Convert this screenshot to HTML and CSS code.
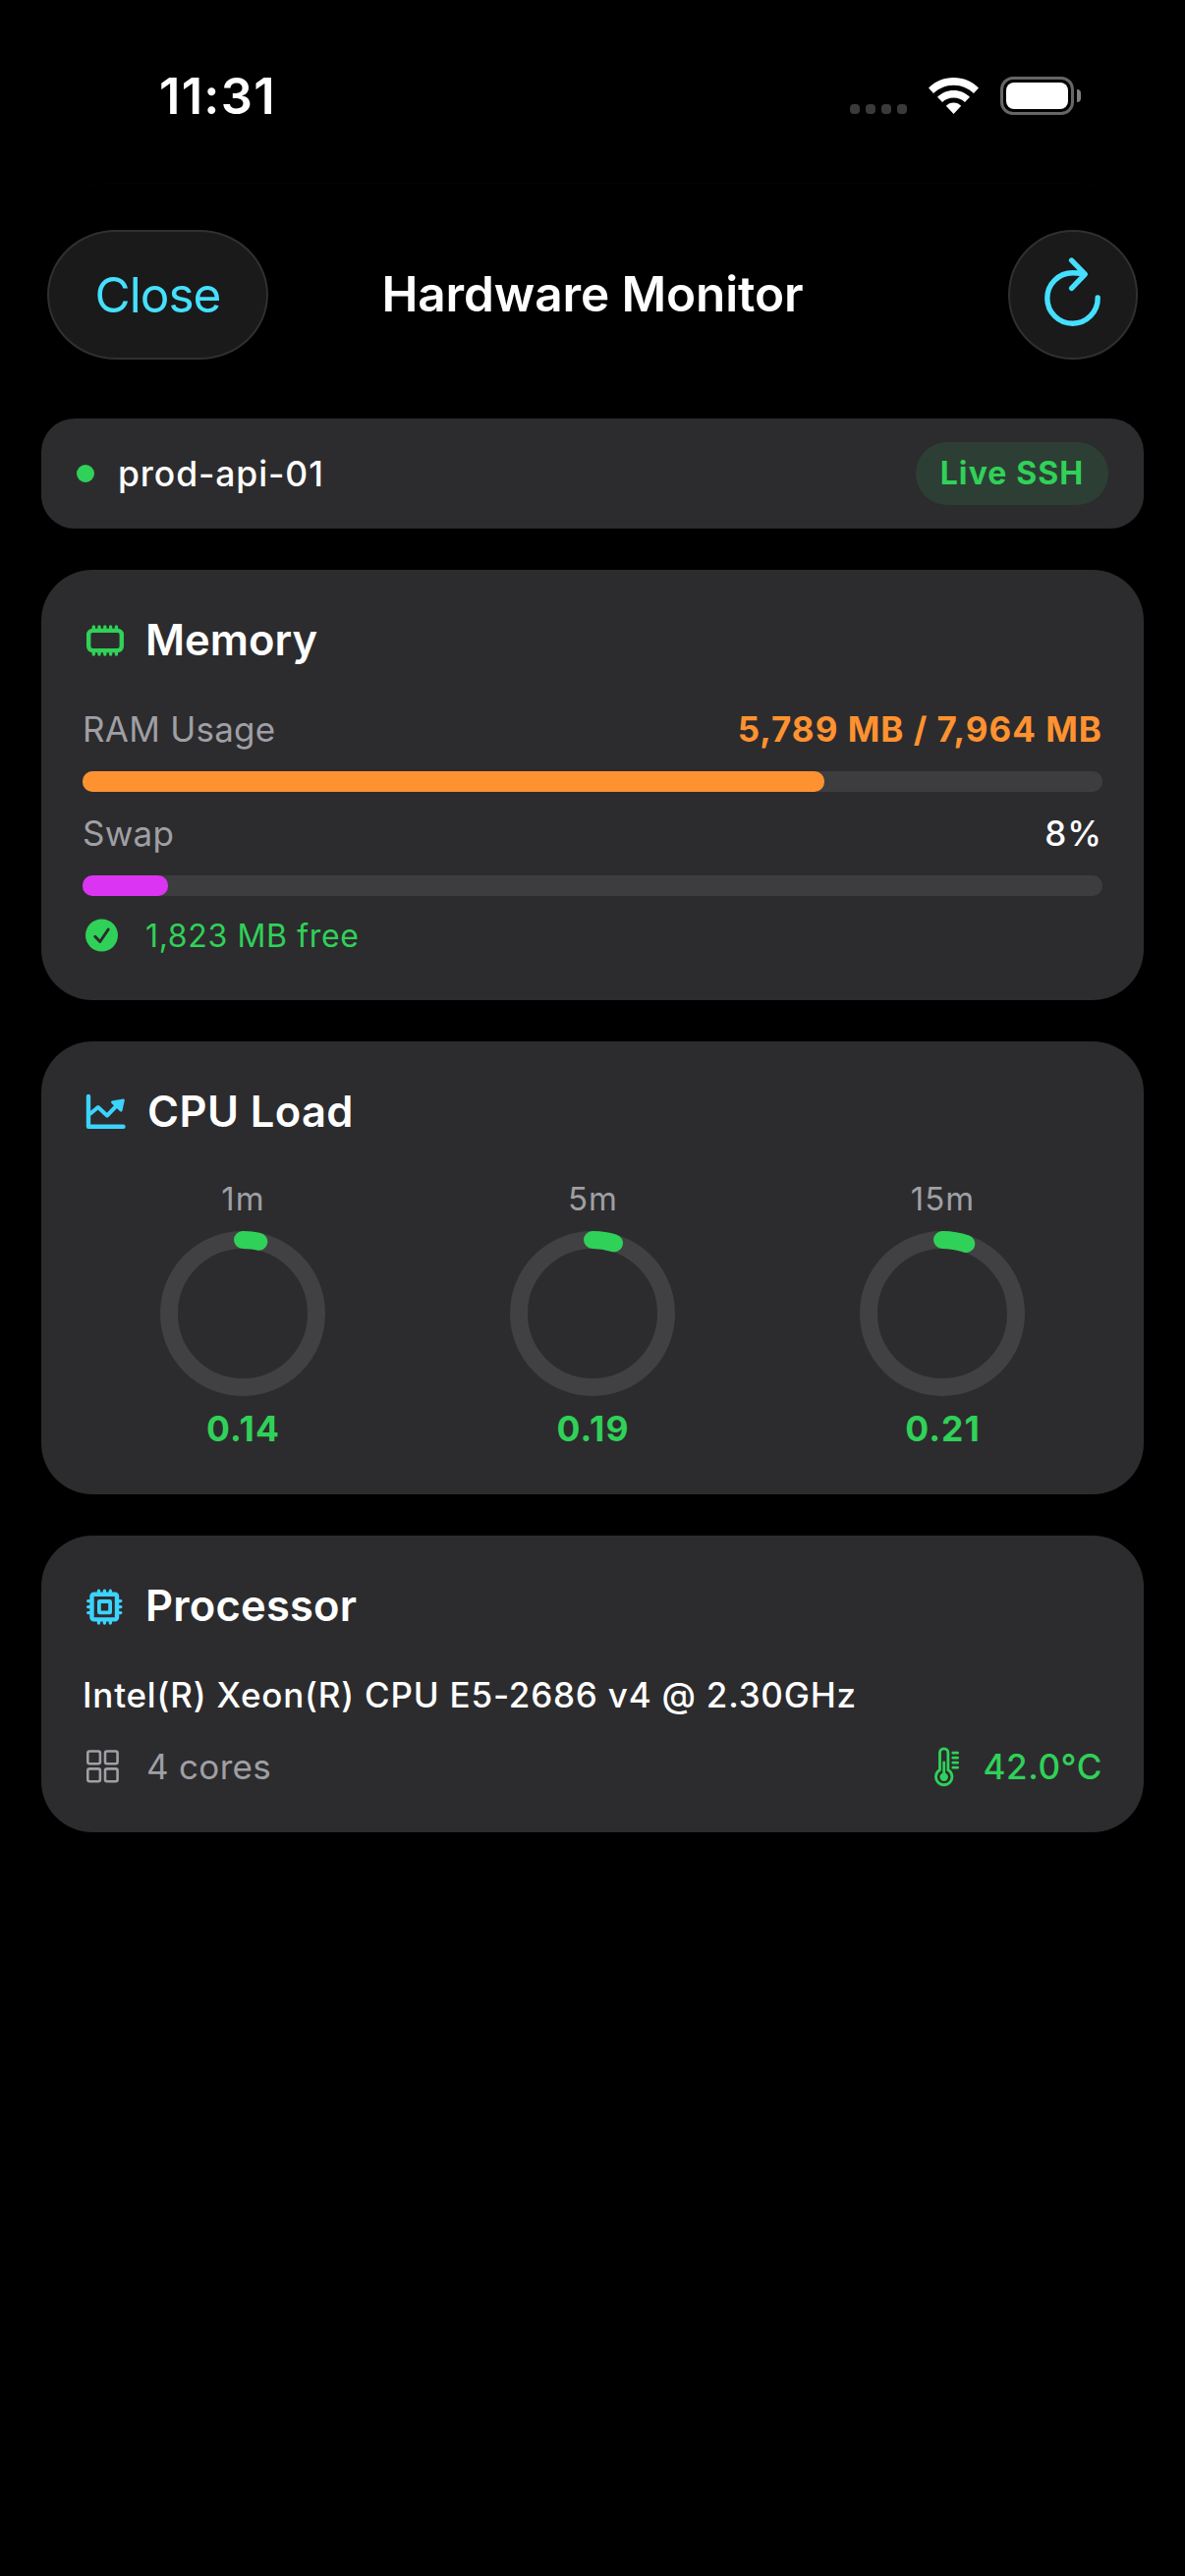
FILE: index.html
```
<!DOCTYPE html>
<html lang="en">
<head>
    <meta charset="UTF-8">
    <meta name="viewport" content="width=device-width, initial-scale=1.0">
    <title>Hardware Monitor</title>
    <link rel="stylesheet" href="styles.css">
</head>
<body>
    <div class="status-bar">
        <span class="time">11:31</span>
        <div class="status-icons">
            <div class="signal"><i></i><i></i><i></i><i></i></div>
            <svg class="wifi" viewBox="0 0 51 37">
                <path d="M25.500 0C35.500 0 44.500 4 51 10.500L46 16C40.500 11 33.500 7.800 25.500 7.800S10.500 11 5 16L0 10.500C6.500 4 15.500 0 25.500 0Z"/>
                <path d="M25.500 13C32 13 37.600 15.500 42 19.700L37 25C34 22.200 30 20.500 25.500 20.500S17 22.200 14 25L9 19.700C13.400 15.500 19 13 25.500 13Z"/>
                <path d="M25.500 25.500C28.500 25.500 31.200 26.700 33.200 28.800L25.500 37L17.800 28.800C19.800 26.700 22.500 25.500 25.500 25.500Z"/>
            </svg>
            <div class="battery"><div class="battery-body"><div class="battery-level"></div></div><div class="battery-cap"></div></div>
        </div>
    </div>

    <div class="sheet">
        <header class="header">
            <button class="btn btn-close">Close</button>
            <h1 class="header-title">Hardware Monitor</h1>
            <button class="btn btn-refresh">
                <svg viewBox="1026 234 132 132">
                    <path d="M1117.200 303A25.700 25.700 0 1 1 1091.500 277.800Q1097 277.800 1103.500 279M1090.600 265L1104.300 279.200L1090.600 293.300"/>
                </svg>
            </button>
        </header>

        <main class="content">
            <section class="host">
                <span class="host-dot"></span>
                <span class="host-name">prod-api-01</span>
                <span class="host-badge">Live SSH</span>
            </section>

            <section class="card memory">
                <h2 class="card-title">
                    <svg class="icon green" viewBox="84 622 60 60">
                        <rect x="90.200" y="641.900" width="33.600" height="20.200" rx="4"/>
                        <path d="M95.300 638v3M101 638v3M106.800 638v3M112.600 638v3M118.400 638v3M95.300 663v3M101 663v3M106.800 663v3M112.600 663v3M118.400 663v3" class="pins"/>
                    </svg>
                    <span>Memory</span>
                </h2>
                <div class="row">
                    <span class="label">RAM Usage</span>
                    <span class="value orange">5,789 MB / 7,964 MB</span>
                </div>
                <div class="bar"><div class="bar-fill bar-orange" style="width: 72.7%"></div></div>
                <div class="row">
                    <span class="label">Swap</span>
                    <span class="value plain">8%</span>
                </div>
                <div class="bar"><div class="bar-fill bar-purple" style="width: 8.4%"></div></div>
                <div class="free">
                    <svg class="icon-check" viewBox="0 0 34 34">
                        <circle cx="16.500" cy="17" r="16.500"/>
                        <path d="M9.800 18.300L14.800 23.500L23.200 11"/>
                    </svg>
                    <span>1,823 MB free</span>
                </div>
            </section>

            <section class="card cpu">
                <h2 class="card-title">
                    <svg class="icon cyan" viewBox="84 1102 60 60">
                        <path d="M90 1116v30.800h35.500" class="axis"/>
                        <path d="M92 1133.500L99.800 1127L109 1135.500L121 1123" class="line"/>
                        <path d="M114 1120.500L125.500 1118.500Q127 1118.400 126.800 1120L124.500 1130.500Q123.500 1132.500 122 1131L113.500 1123Q112.200 1121.400 114 1120.500Z" class="head"/>
                    </svg>
                    <span>CPU Load</span>
                </h2>
                <div class="loads">
                    <div class="load">
                        <span class="load-label">1m</span>
                        <svg class="ring" viewBox="0 0 168 168">
                            <circle cx="84" cy="84" r="75"/>
                            <circle cx="84" cy="84" r="75" class="arc" pathLength="400" stroke-dasharray="14 400"/>
                        </svg>
                        <span class="load-value">0.14</span>
                    </div>
                    <div class="load">
                        <span class="load-label">5m</span>
                        <svg class="ring" viewBox="0 0 168 168">
                            <circle cx="84" cy="84" r="75"/>
                            <circle cx="84" cy="84" r="75" class="arc" pathLength="400" stroke-dasharray="19 400"/>
                        </svg>
                        <span class="load-value">0.19</span>
                    </div>
                    <div class="load">
                        <span class="load-label">15m</span>
                        <svg class="ring" viewBox="0 0 168 168">
                            <circle cx="84" cy="84" r="75"/>
                            <circle cx="84" cy="84" r="75" class="arc" pathLength="400" stroke-dasharray="21 400"/>
                        </svg>
                        <span class="load-value">0.21</span>
                    </div>
                </div>
            </section>

            <section class="card processor">
                <h2 class="card-title">
                    <svg class="icon cyan" viewBox="84 1605 60 60">
                        <rect x="93.500" y="1622.700" width="25.500" height="25.700" rx="2"/>
                        <rect x="100.900" y="1630" width="11.200" height="11.400" rx="0.500" class="core"/>
                        <path d="M100.500 1619.300v2M106.400 1619.300v2M112.300 1619.300v2M100.500 1650v2M106.400 1650v2M112.300 1650v2M89.700 1629.600h2M89.700 1635.600h2M89.700 1641.600h2M120.800 1629.600h2M120.800 1635.600h2M120.800 1641.600h2" class="pins"/>
                    </svg>
                    <span>Processor</span>
                </h2>
                <p class="model">Intel(R) Xeon(R) CPU E5-2686 v4 @ 2.30GHz</p>
                <div class="row">
                    <span class="cores">
                        <svg class="icon-grid" viewBox="0 0 34 34">
                            <rect x="1.300" y="1.500" width="12.600" height="12.800" rx="2"/>
                            <rect x="19" y="1.500" width="12.600" height="12.800" rx="2"/>
                            <rect x="1.300" y="19.400" width="12.600" height="12.800" rx="2"/>
                            <rect x="19" y="19.400" width="12.600" height="12.800" rx="2"/>
                        </svg>
                        <span>4 cores</span>
                    </span>
                    <span class="temp">
                        <svg class="icon-temp" viewBox="0 0 26 41">
                            <path d="M5.500 23.500V6a4.200 4.200 0 0 1 8.400 0V23.500A8.200 8.200 0 1 1 5.500 23.500Z"/>
                            <path d="M9.700 16V30M18.800 6.200h4.800M18.800 11.200h4.800M18.800 16.200h4.800M18.800 21.200h4.800"/>
                            <circle cx="9.700" cy="30.800" r="4.200"/>
                        </svg>
                        <span>42.0°C</span>
                    </span>
                </div>
            </section>
        </main>
    </div>
</body>
</html>
```
FILE: styles.css
```
* {
    margin: 0;
    padding: 0;
    box-sizing: border-box;
}
body {
    width: 1206px;
    height: 2622px;
    overflow: hidden;
    background: #000;
    color: #fff;
    font-family: Inter, "Liberation Sans", sans-serif;
    font-size: 35px;
}
svg {
    display: block;
    flex: none;
}
/* status bar */
.status-bar {
    display: flex;
    justify-content: space-between;
    height: 186px;
    padding: 78px 106px 0 162px;
}
.time {
    font-size: 50.5px;
    font-weight: 600;
    line-height: 40px;
    letter-spacing: 1.3px;
}
.status-icons {
    display: flex;
    height: 39px;
}
.signal {
    display: flex;
    gap: 6px;
    margin: 28px 22px 0 0;
}
.signal i {
    width: 10px;
    height: 10px;
    border-radius: 4px;
    background: #3a3a3a;
}
.wifi {
    width: 51px;
    height: 37px;
    margin: 1px 22px 0 0;
    fill: #fff;
}
.battery {
    display: flex;
    align-items: center;
    gap: 3px;
}
.battery-body {
    width: 75px;
    height: 39px;
    padding: 3px;
    border: 3px solid #666;
    border-radius: 13px;
}
.battery-level {
    height: 27px;
    border-radius: 8px;
    background: #fff;
}
.battery-cap {
    width: 4px;
    height: 13px;
    border-radius: 0 4px 4px 0;
    background: #808080;
}
/* sheet */
.sheet {
    height: 2436px;
    border-top: 1px solid #040404;
    border-radius: 114px 114px 0 0;
}
.header {
    display: grid;
    grid-template-columns: 1fr auto 1fr;
    align-items: center;
    padding: 47px 48px 0;
}
.header-title {
    padding-bottom: 2px;
    font-size: 49.5px;
    font-weight: 600;
    line-height: 130px;
    letter-spacing: -0.1px;
}
.btn {
    height: 132px;
    border: 2px solid #303030;
    border-radius: 66px;
    background: #1a1a1a;
    color: #45e0ff;
    font-family: inherit;
    font-size: 49.5px;
}
.btn-close {
    width: 225px;
    border-radius: 70px / 66px;
    letter-spacing: -1px;
}
.btn-refresh {
    width: 132px;
    justify-self: end;
}
.btn-refresh svg {
    width: 132px;
    height: 132px;
    margin: -2px;
    fill: none;
    stroke: #45e0ff;
    stroke-width: 5.4;
    stroke-linecap: round;
    stroke-linejoin: round;
}
.content {
    display: flex;
    flex-direction: column;
    gap: 42px;
    padding: 60px 42px 0;
}
/* host */
.host {
    display: flex;
    align-items: center;
    height: 112px;
    padding: 0 36px;
    border-radius: 34px;
    background: #2c2c2e;
}
.host-dot {
    width: 18px;
    height: 18px;
    margin-right: 24px;
    border-radius: 50%;
    background: #30d158;
}
.host-name {
    font-size: 35.5px;
    font-weight: 500;
    letter-spacing: 0.9px;
}
.host-badge {
    width: 196px;
    margin-left: auto;
    border-radius: 32px;
    background: #2d3f34;
    color: #30d158;
    font-size: 32px;
    font-weight: 700;
    line-height: 64px;
    letter-spacing: 1.1px;
    text-align: center;
}
/* cards */
.card {
    padding: 42px;
    border-radius: 52px;
    background: #2c2c2e;
}
.memory {
    height: 438px;
}
.cpu {
    height: 461px;
}
.processor {
    height: 302px;
}
.card-title {
    display: flex;
    height: 60px;
    margin-bottom: 36px;
    font-size: 43.5px;
    font-weight: 600;
    line-height: 59px;
}
.icon {
    width: 60px;
    height: 60px;
    margin-right: 4px;
    fill: none;
    stroke-width: 4.4;
    stroke-linecap: round;
    stroke-linejoin: round;
}
.cpu .card-title {
    gap: 2px;
    letter-spacing: 0.4px;
}
.processor .card-title {
    letter-spacing: 0.2px;
}
.green {
    stroke: #30d158;
}
.cyan {
    stroke: #3cd3fe;
}
.pins {
    stroke-width: 3.4;
}
.core {
    stroke-width: 3.8;
}
.line {
    stroke-width: 4;
}
.head {
    fill: #3cd3fe;
    stroke: none;
}
.row {
    display: flex;
    justify-content: space-between;
    line-height: 49px;
}
.label {
    color: #9f9fa4;
    letter-spacing: 0.25px;
}
.value {
    font-weight: 700;
    letter-spacing: 1px;
}
.orange {
    color: #ff9230;
}
.plain {
    font-weight: 500;
}
.bar {
    height: 21px;
    margin: 18px 0;
    border-radius: 10px;
    background: #3d3d3f;
}
.bar-fill {
    height: 21px;
    border-radius: 10px;
}
.bar-orange {
    background: #ff9230;
}
.bar-purple {
    background: #db34f2;
}
.free {
    display: flex;
    color: #30d158;
    font-size: 32px;
    line-height: 46px;
    letter-spacing: 0.65px;
}
.icon-check {
    width: 34px;
    height: 34px;
    margin: 5px 27px 0 3px;
    fill: #30d158;
}
.icon-check path {
    fill: none;
    stroke: #2c2c2e;
    stroke-width: 3;
    stroke-linecap: round;
    stroke-linejoin: round;
}
/* load rings */
.loads {
    display: grid;
    grid-template-columns: repeat(3, 1fr);
    gap: 30px;
}
.load {
    display: flex;
    flex-direction: column;
    align-items: center;
}
.load-label {
    height: 43px;
    padding-left: 1px;
    color: #9f9fa4;
    font-size: 33px;
    line-height: 45px;
    letter-spacing: 1.1px;
}
.ring {
    width: 168px;
    height: 168px;
    margin: 12px 0;
    fill: none;
    stroke: #414143;
    stroke-width: 18;
    transform: rotate(-90deg);
}
.arc {
    stroke: #30d158;
    stroke-linecap: round;
}
.load-value {
    padding-left: 1px;
    color: #30d158;
    font-size: 35.5px;
    font-weight: 700;
    line-height: 43px;
    letter-spacing: 1px;
}
/* processor */
.model {
    margin-bottom: 24px;
    font-weight: 500;
    line-height: 49px;
    letter-spacing: 0.78px;
}
.cores, .temp {
    display: flex;
}
.cores {
    color: #9f9fa4;
    letter-spacing: 0.3px;
}
.icon-grid {
    width: 34px;
    height: 34px;
    margin: 7px 27px 0 4px;
    fill: none;
    stroke: #9f9fa4;
    stroke-width: 2.6;
}
.temp {
    color: #30d158;
    font-weight: 500;
    letter-spacing: 0.6px;
}
.icon-temp {
    width: 26px;
    height: 41px;
    margin: 4px 23px 0 0;
    fill: none;
    stroke: #30d158;
    stroke-width: 2.8;
    stroke-linecap: round;
}
.icon-temp circle {
    fill: #30d158;
    stroke: none;
}
```
